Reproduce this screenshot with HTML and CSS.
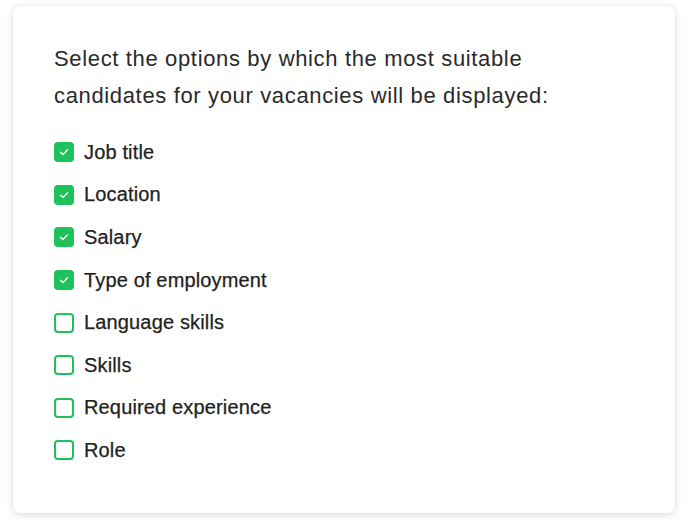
FILE: index.html
```html
<!DOCTYPE html>
<html lang="en">
<head>
  <meta charset="UTF-8" />
  <meta name="viewport" content="width=device-width, initial-scale=1.0"/>
  <title>Candidate Options</title>
  <link rel="stylesheet" href="styles.css">
</head>
<body>
  <div class="card">
    <p class="intro">Select the options by which the most suitable candidates for your vacancies will be displayed:</p>
    <ul class="options">
      <li class="option"><span class="box checked"><svg viewBox="0 0 20 20"><path d="M6.5 10.2l2.4 2.4 4.7-4.8"/></svg></span>Job title</li>
      <li class="option"><span class="box checked"><svg viewBox="0 0 20 20"><path d="M6.5 10.2l2.4 2.4 4.7-4.8"/></svg></span>Location</li>
      <li class="option"><span class="box checked"><svg viewBox="0 0 20 20"><path d="M6.5 10.2l2.4 2.4 4.7-4.8"/></svg></span>Salary</li>
      <li class="option"><span class="box checked"><svg viewBox="0 0 20 20"><path d="M6.5 10.2l2.4 2.4 4.7-4.8"/></svg></span>Type of employment</li>
      <li class="option"><span class="box"></span>Language skills</li>
      <li class="option"><span class="box"></span>Skills</li>
      <li class="option"><span class="box"></span>Required experience</li>
      <li class="option"><span class="box"></span>Role</li>
    </ul>
  </div>
</body>
</html>
```

FILE: styles.css
```css
/* General Styles */
body {
  margin: 0;
  padding: 6px 13px;
  background: #ffffff;
  font-family: "Liberation Sans", Arial, sans-serif;
  color: #222;
}

.card {
  width: 662px;
  height: 507px;
  box-sizing: border-box;
  padding: 34px 41px 0;
  background: #fff;
  border-radius: 8px;
  box-shadow: 0 2px 8px rgba(0, 0, 0, 0.14), 0 0 2px rgba(0, 0, 0, 0.06);
}

.intro {
  max-width: 500px;
  margin: 0 0 17px;
  font-size: 22px;
  line-height: 37px;
  letter-spacing: 0.65px;
  color: #2a2a2a;
}

/* Options list */
.options {
  list-style: none;
  margin: 0;
  padding: 0;
}

.option {
  display: flex;
  align-items: center;
  gap: 10px;
  height: 42.6px;
  font-size: 20px;
  letter-spacing: 0.15px;
  color: #222;
  -webkit-text-stroke: 0.25px #222;
}

.box {
  width: 20px;
  height: 20px;
  box-sizing: border-box;
  border: 2px solid #1fc15a;
  border-radius: 4px;
  flex-shrink: 0;
}

.box.checked {
  background: #1fc15a;
  border: none;
}

.box svg {
  display: block;
  width: 20px;
  height: 20px;
  fill: none;
  stroke: #fff;
  stroke-width: 1.4;
  stroke-linecap: round;
  stroke-linejoin: round;
}
```
